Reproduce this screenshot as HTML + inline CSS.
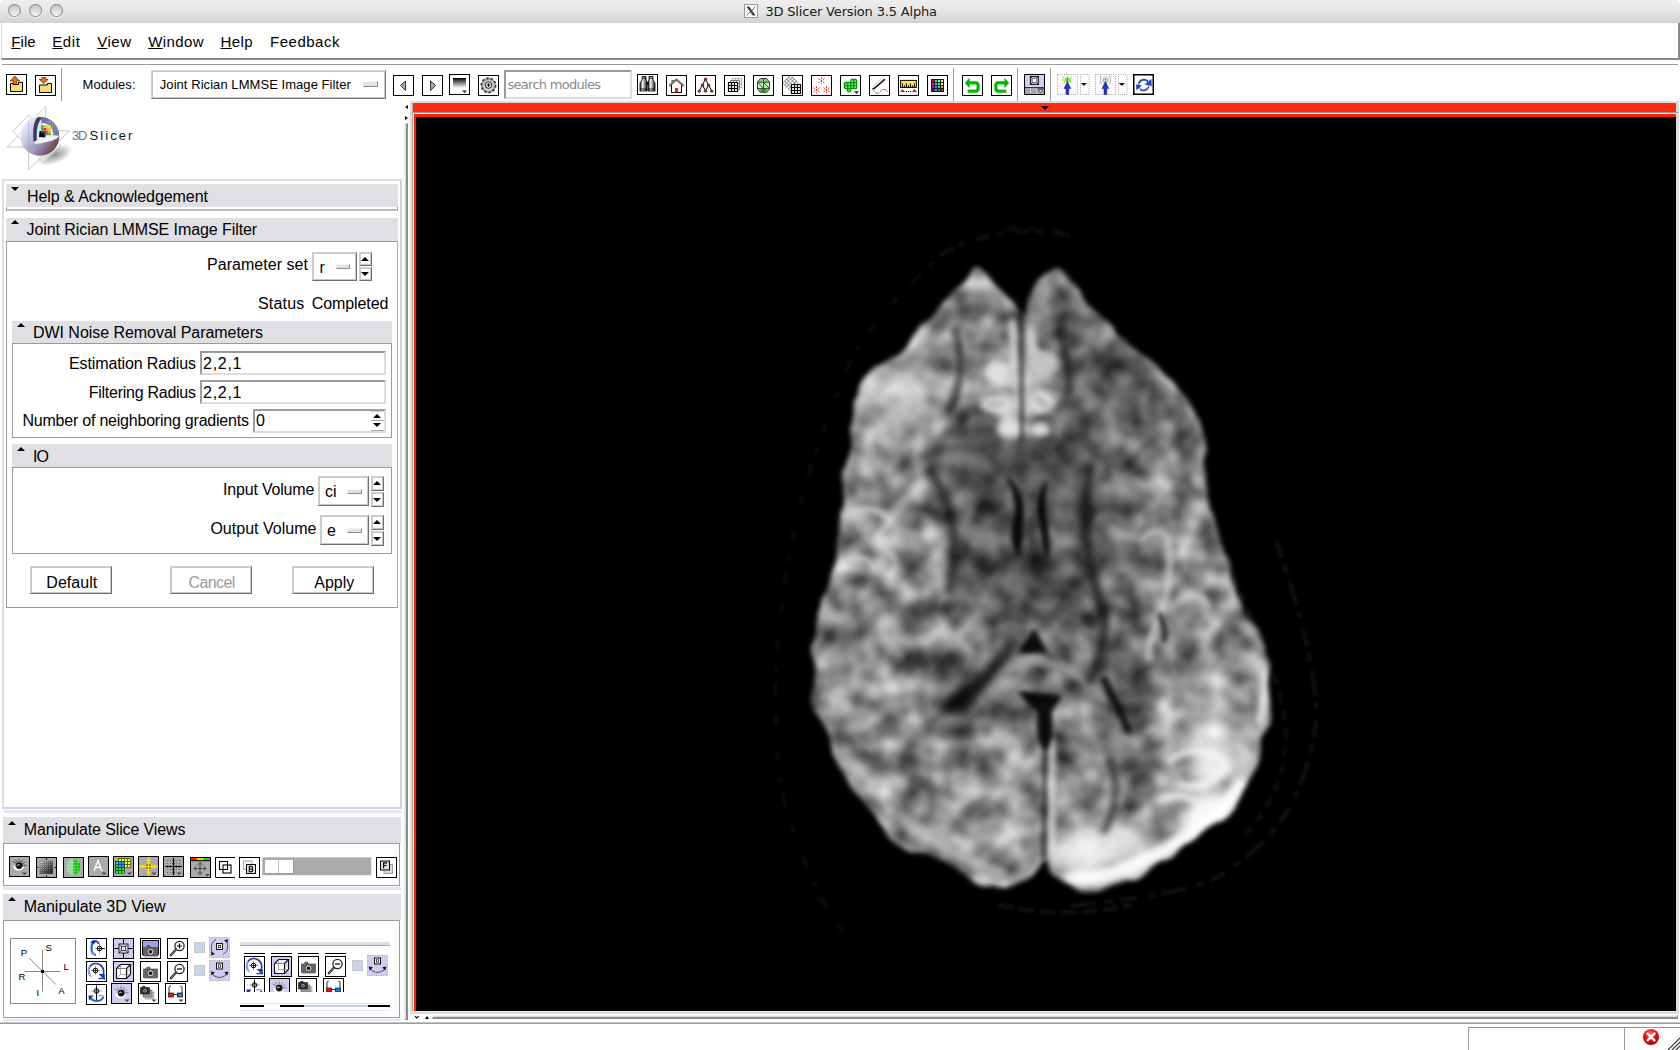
<!DOCTYPE html>
<html><head><meta charset="utf-8"><title>3D Slicer Version 3.5 Alpha</title>
<style>
html,body{margin:0;padding:0;background:#fff;}
body{width:1680px;height:1050px;overflow:hidden;position:relative;font-family:"Liberation Sans",sans-serif;color:#000;}
.a{position:absolute;}
.t{position:absolute;white-space:nowrap;line-height:1;}
#titlebar{left:0;top:0;width:1680px;height:23px;background:linear-gradient(#eeeeee,#e6e6e6 45%,#d6d6d6 90%,#cfcfcf);border-radius:5px 5px 0 0;}
.tl{position:absolute;top:4px;width:13px;height:13px;border-radius:50%;background:radial-gradient(circle at 50% 85%,#f4f4f4 0,#d9d9d9 45%,#b9b9b9 100%);box-shadow:0 0 0 1px #8e8e8e inset,0 1px 0 #f6f6f6;}
.band{position:absolute;background:#e0dfe3;}
.fr{position:absolute;border:1px solid #9a9a9a;box-sizing:border-box;}
.h16{font-size:16px;letter-spacing:-.12px;}
.ent{position:absolute;box-sizing:border-box;border:2px solid;border-color:#9c9c9c #dcdcdc #dcdcdc #9c9c9c;background:#fff;}
.btn{position:absolute;box-sizing:border-box;border:1px solid;border-color:#d0d0d0 #6e6e6e #6e6e6e #d0d0d0;background:#fff;box-shadow:0 0 0 1px #c8c8c8 inset;}
.ico{position:absolute;box-sizing:border-box;width:21px;height:21px;border:1px solid #000;background:#fff;}
</style></head><body>
<!-- TITLE BAR -->
<div id="titlebar" class="a">
 <div class="tl" style="left:8px"></div><div class="tl" style="left:29px"></div><div class="tl" style="left:50px"></div>
 <svg id="x11ico" class="a" style="left:744px;top:4px" width="14" height="14" viewBox="0 0 14 14"><rect x=".5" y=".5" width="13" height="13" fill="#fff" stroke="#9a9a9a"/><path d="M2.300 2.500 H5.300 L11.700 11.500 H8.700 Z" fill="#444"/><path d="M11.500 2.500 L2.500 11.500" stroke="#444" stroke-width=".8"/></svg>
 </div>
<!-- MENU BAR -->
<div class="a" id="menubar" style="left:1px;top:23px;width:1676px;height:35px;background:#fff;border-left:1px solid #d8d8d8;border-bottom:2px solid #8a8a8a;border-right:2px solid #8a8a8a;"></div>
<!-- TOOLBAR -->
<div class="a" id="toolbar" style="left:2px;top:64px;width:1676px;height:1px;background:#9a9a9a;"></div>
<!-- load/save icons -->
<svg class="a" style="left:6px;top:74px" width="21" height="21" viewBox="0 0 21 21"><rect x=".5" y=".5" width="20" height="20" fill="#fff" stroke="#000"/><path d="M8.8 2 L13.6 7 L10.8 7 L10.8 10.5 L7 10.5 L7 7 L4 7 Z" fill="#f56a00" stroke="#000" stroke-width=".5"/><path d="M4.5 9.5 H7 V10.5 H12.5 V8.3 H16.5 V17.5 H4.5 Z" fill="#f7dc6f" stroke="#000" stroke-width="1"/></svg>
<svg class="a" style="left:35px;top:75px" width="21" height="21" viewBox="0 0 21 21"><rect x=".5" y=".5" width="20" height="20" fill="#fff" stroke="#000"/><path d="M6.8 2.5 H10.6 V4.3 H13.2 L8.7 8.6 L4.2 4.3 H6.8 Z" fill="#f56a00" stroke="#000" stroke-width=".5"/><path d="M4.5 10 H12.5 V8.5 H16.5 V17.5 H4.5 Z" fill="#f7dc6f" stroke="#000" stroke-width="1"/></svg>
<div class="a" style="left:61px;top:68px;width:1px;height:33px;background:#9a9a9a;"></div>
<!-- module menubutton -->
<div class="a" style="left:151px;top:70px;width:235px;height:29px;box-sizing:border-box;border:1px solid;border-color:#d4d4d4 #7a7a7a #7a7a7a #d4d4d4;box-shadow:0 0 0 1px #c4c4c4 inset;background:#fff;"></div>
<div class="a" style="left:363px;top:81px;width:15px;height:6px;box-sizing:border-box;background:#e2e2e2;border:1px solid;border-color:#f4f4f4 #8c8c8c #8c8c8c #f4f4f4;"></div>
<!-- nav icons -->
<svg class="a" style="left:393px;top:75px" width="21" height="21" viewBox="0 0 21 21"><rect x=".5" y=".5" width="20" height="20" fill="#fff" stroke="#000"/><path d="M12.5 6 L12.5 15.5 L7.5 10.5 Z" fill="#aaa" stroke="#333" stroke-width="1"/></svg>
<svg class="a" style="left:422px;top:75px" width="21" height="21" viewBox="0 0 21 21"><rect x=".5" y=".5" width="20" height="20" fill="#fff" stroke="#000"/><path d="M8.5 6 L8.5 15.5 L13.5 10.5 Z" fill="#aaa" stroke="#333" stroke-width="1"/></svg>
<svg class="a" style="left:449px;top:74px" width="21" height="21" viewBox="0 0 21 21"><defs><linearGradient id="gh" x1="0" y1="0" x2="0" y2="1"><stop offset="0" stop-color="#000"/><stop offset=".25" stop-color="#444"/><stop offset="1" stop-color="#fff"/></linearGradient></defs><rect x=".5" y=".5" width="20" height="20" fill="#fff" stroke="#000"/><rect x="4" y="4" width="13" height="10" fill="url(#gh)"/><path d="M13 16.5 H18 L15.5 19 Z" fill="#222"/></svg>
<svg class="a" style="left:478px;top:75px" width="21" height="21" viewBox="0 0 21 21"><rect x=".5" y=".5" width="20" height="20" fill="#fff" stroke="#000"/><circle cx="10.5" cy="10.3" r="7.6" fill="#9a9a9a"/><circle cx="10.5" cy="10.3" r="7.2" fill="none" stroke="#2a2a2a" stroke-width="1.6" stroke-dasharray="2.2 2.3"/><circle cx="10.5" cy="10.3" r="5.6" fill="#cfcfcf"/><circle cx="10.5" cy="10" r="3.3" fill="#f2f2f2" stroke="#222" stroke-width="1"/><path d="M10.5 8.3 V11.7 M8.8 10 H12.2" stroke="#000" stroke-width="1.2"/></svg>
<!-- search -->
<div class="a" style="left:504px;top:70px;width:128px;height:29px;box-sizing:border-box;border:2px solid;border-color:#9a9a9a #dedede #dedede #9a9a9a;background:#fff;"></div>
<!-- binoculars -->
<svg class="a" style="left:637px;top:74px" width="21" height="21" viewBox="0 0 21 21"><defs><linearGradient id="gb" x1="0" y1="0" x2="1" y2="0"><stop offset="0" stop-color="#222"/><stop offset=".35" stop-color="#e8e8e8"/><stop offset=".6" stop-color="#aaa"/><stop offset="1" stop-color="#111"/></linearGradient></defs><rect x=".5" y=".5" width="20" height="20" fill="#fff" stroke="#000"/><path d="M5 2.5 H9 V6 L10 8 V17 H3 V9 L5 6 Z" fill="url(#gb)" stroke="#000" stroke-width=".8"/><path d="M12 2.5 H16 V6 L18 9 V17 H11 V8 L12 6 Z" fill="url(#gb)" stroke="#000" stroke-width=".8"/><rect x="9" y="8" width="3" height="3" fill="#111"/><path d="M3 15 H10 M11 15 H18 M5 4.2 H9 M12 4.2 H16" stroke="#000" stroke-width=".8"/></svg>
<!-- home -->
<svg class="a" style="left:666px;top:75px" width="21" height="21" viewBox="0 0 21 21"><rect x=".5" y=".5" width="20" height="20" fill="#fff" stroke="#000"/><path d="M5.5 10 V17.5 H15.5 V10" fill="#fff" stroke="#000" stroke-width="1"/><rect x="9" y="13" width="3" height="4.5" fill="#e02a00"/><path d="M3.2 11 L10.5 4.5 L17.8 11" fill="none" stroke="#6e6a5e" stroke-width="2"/><path d="M6 8 V5.5 H7.5 V7" fill="none" stroke="#6e6a5e" stroke-width="1.2"/></svg>
<!-- tree -->
<svg class="a" style="left:695px;top:75px" width="21" height="21" viewBox="0 0 21 21"><rect x=".5" y=".5" width="20" height="20" fill="#fff" stroke="#000"/><path d="M10.5 4 L7.5 10 L4 16 M7.5 10 L10.5 16 M10.5 4 L13.5 10 L16.8 16 M13.5 10 L10.5 16" stroke="#000" stroke-width="1" fill="none"/><g fill="#e02a00" stroke="#000" stroke-width=".5"><ellipse cx="10.5" cy="4" rx="1.5" ry="1"/><ellipse cx="7.5" cy="10" rx="1.5" ry="1"/><ellipse cx="13.5" cy="10" rx="1.5" ry="1"/><ellipse cx="4.3" cy="16.2" rx="1.5" ry="1"/><ellipse cx="10.5" cy="16.2" rx="1.5" ry="1"/><ellipse cx="16.7" cy="16.2" rx="1.5" ry="1"/></g></svg>
<!-- grid stack -->
<svg class="a" style="left:724px;top:75px" width="21" height="21" viewBox="0 0 21 21"><rect x=".5" y=".5" width="20" height="20" fill="#fff" stroke="#000"/><path d="M8.5 3.5 H17.5 V12.5 H8.5 Z M11.5 3.5 V12.5 M14.5 3.5 V12.5 M8.5 6.5 H17.5 M8.5 9.5 H17.5" fill="#fff" stroke="#b0b0b0" stroke-width="1"/><path d="M6.5 5.5 H15.5 V14.5 H6.5 Z M9.5 5.5 V14.5 M12.5 5.5 V14.5 M6.5 8.5 H15.5 M6.5 11.5 H15.5" fill="#fff" stroke="#777" stroke-width="1"/><path d="M4.5 7.5 H13.5 V16.5 H4.5 Z M7.5 7.5 V16.5 M10.5 7.5 V16.5 M4.5 10.5 H13.5 M4.5 13.5 H13.5" fill="#fff" stroke="#000" stroke-width="1.2"/></svg>
<!-- green octagon -->
<svg class="a" style="left:753px;top:75px" width="21" height="21" viewBox="0 0 21 21"><rect x=".5" y=".5" width="20" height="20" fill="#fff" stroke="#000"/><path d="M7.5 3.5 H13.5 L16.5 7 V14 L13.5 17.5 H7.5 L4.5 14 V7 Z" fill="#8cc878" stroke="#2c4a2c" stroke-width="1"/><path d="M7.5 13.5 H13.5 L13.5 17.5 H7.5 Z" fill="#4a9a3a"/><path d="M5 7.5 H10 V13 H5 Z M11 7.5 H16 V13 H11 Z" fill="#c4f0b4"/><path d="M10.5 3.5 V17.5 M4.5 7.3 H16.5 M4.5 13.5 H16.5 M5.5 8 L10 13 M11 8 L16 13" stroke="#2c4a2c" stroke-width=".9" fill="none"/></svg>
<!-- rotated grids -->
<svg class="a" style="left:782px;top:75px" width="21" height="21" viewBox="0 0 21 21"><rect x=".5" y=".5" width="20" height="20" fill="#fff" stroke="#000"/><g transform="rotate(45 8.5 8)" stroke="#222" stroke-width=".75" fill="none" stroke-dasharray="1.2 .5"><path d="M3 2.5 H14 V13.5 H3 Z M5.75 2.5 V13.5 M8.5 2.5 V13.5 M11.25 2.5 V13.5 M3 5.25 H14 M3 8 H14 M3 10.75 H14"/></g><path d="M9.5 9.5 H18.5 V18.5 H9.5 Z M12.5 9.5 V18.5 M15.5 9.5 V18.5 M9.5 12.5 H18.5 M9.5 15.5 H18.5" fill="#fff" stroke="#000" stroke-width="1.2"/></svg>
<!-- red stars -->
<svg class="a" style="left:811px;top:75px" width="21" height="21" viewBox="0 0 21 21"><rect x=".5" y=".5" width="20" height="20" fill="#fff" stroke="#000"/><g stroke="#ff1010" stroke-width="1" stroke-dasharray="1.6 1.2"><path d="M10.5 2.5 V9 M7.5 3.7 L13.5 7.8 M13.5 3.7 L7.5 7.8"/><path d="M5.5 11.5 V18 M2.5 12.7 L8.5 16.8 M8.5 12.7 L2.5 16.8"/><path d="M15.5 11.5 V18 M12.5 12.7 L18.5 16.8 M18.5 12.7 L12.5 16.8"/></g></svg>
<!-- green blob -->
<svg class="a" style="left:840px;top:75px" width="21" height="21" viewBox="0 0 21 21"><rect x=".5" y=".5" width="20" height="20" fill="#fff" stroke="#000"/><path d="M11.5 4 H16 L17 5 V13 L16 14 H11 V16.2 L10.2 17 H8 L7 16 V14 H5 L4 13 V8 L5 7 H10.5 V5 Z" fill="#00a000" stroke="#008800" stroke-width=".5"/><g fill="#f0ffe8"><rect x="11.5" y="5.4" width="1.3" height="1.3"/><rect x="14.6" y="5.4" width="1.3" height="1.3"/><rect x="5.5" y="8.4" width="1.3" height="1.3"/><rect x="8.5" y="8.4" width="1.3" height="1.3"/><rect x="11.5" y="8.4" width="1.3" height="1.3"/><rect x="14.6" y="8.4" width="1.3" height="1.3"/><rect x="5.5" y="11.4" width="1.3" height="1.3"/><rect x="8.5" y="11.4" width="1.3" height="1.3"/><rect x="11.5" y="11.4" width="1.3" height="1.3"/><rect x="14.6" y="11.4" width="1.3" height="1.3"/><rect x="8.5" y="14.5" width="1.3" height="1.3"/></g><path d="M14 16.3 H19 L16.5 19 Z" fill="#223"/></svg>
<!-- pencil -->
<svg class="a" style="left:869px;top:75px" width="21" height="21" viewBox="0 0 21 21"><rect x=".5" y=".5" width="20" height="20" fill="#fff" stroke="#000"/><path d="M4.1 11.6 L13.4 2.4 L16 4.2 L5 14 Z" fill="#f6f6f6"/><path d="M4.1 11.6 L13.4 2.4 L15.6 3.6" fill="none" stroke="#aaa" stroke-width=".8" stroke-dasharray="1.2 .8"/><path d="M4.6 14 L15.9 4.2" stroke="#000" stroke-width="1.5"/><path d="M2.9 14.6 L4 12.6 L5.6 14 Z" fill="#000"/><path d="M4.1 15.3 C5.5 17 7 18.6 8.4 18.5 C10.5 18.3 12 14.6 14.6 14.4 C16.2 14.3 17.5 15.4 18.4 16.6" fill="none" stroke="#ff1060" stroke-width="1" stroke-dasharray="2 .7"/></svg>
<!-- ruler -->
<svg class="a" style="left:898px;top:75px" width="21" height="21" viewBox="0 0 21 21"><rect x=".5" y=".5" width="20" height="20" fill="#fff" stroke="#000"/><rect x="2.6" y="5.4" width="15.8" height="7" fill="#ffe840" stroke="#000" stroke-width="1"/><path d="M4.5 12.4 V8.3 M8.4 12.4 V8.3 M12.4 12.4 V8.3 M16.4 12.4 V8.3 M6.4 12.4 V10.4 M10.4 12.4 V10.4 M14.4 12.4 V10.4" stroke="#000" stroke-width="1"/><path d="M2 17 L4.5 14 L7 17 Z M14 17 L16.5 14 L19 17 Z" fill="#f00"/><path d="M8 16.500 H13" stroke="#000" stroke-width="1" stroke-dasharray="1 1"/></svg>
<!-- color table -->
<svg class="a" style="left:927px;top:75px" width="21" height="21" viewBox="0 0 21 21"><rect x=".5" y=".5" width="20" height="20" fill="#fff" stroke="#000"/><rect x="4" y="4" width="13" height="13" fill="#181818"/><rect x="5" y="5" width="2" height="2" fill="#ff0000"/><rect x="8" y="5" width="2" height="2" fill="#30ff50"/><rect x="11" y="5" width="2" height="2" fill="#a0ffff"/><rect x="14" y="5" width="2" height="2" fill="#ffffa0"/><rect x="5" y="8" width="2" height="2" fill="#ff00ff"/><rect x="8" y="8" width="2" height="2" fill="#90a0e0"/><rect x="11" y="8" width="2" height="2" fill="#00f0f0"/><rect x="14" y="8" width="2" height="2" fill="#ffff30"/><rect x="5" y="11" width="2" height="2" fill="#c000c0"/><rect x="8" y="11" width="2" height="2" fill="#20a0b0"/><rect x="11" y="11" width="2" height="2" fill="#00e0a0"/><rect x="14" y="11" width="2" height="2" fill="#ff9060"/><rect x="5" y="14" width="2" height="2" fill="#7000b0"/><rect x="8" y="14" width="2" height="2" fill="#6090f0"/><rect x="11" y="14" width="2" height="2" fill="#00a020"/><rect x="14" y="14" width="2" height="2" fill="#ff0060"/></svg>
<div class="a" style="left:953px;top:68px;width:1px;height:33px;background:#9a9a9a;"></div>
<!-- undo / redo -->
<svg class="a" style="left:962px;top:75px" width="21" height="21" viewBox="0 0 21 21"><rect x=".5" y=".5" width="20" height="20" fill="#fff" stroke="#000"/><path d="M2.9 8 L7.5 2.9 V6.2 H13.5 C16.2 6.2 17.7 8 17.7 10.5 V13.5 C17.7 16 16.2 17.7 13.5 17.7 H5.9 V14.7 H13 C14.2 14.7 14.7 14 14.7 13 V10.8 C14.7 9.8 14.2 9.2 13 9.2 H7.5 V12.9 Z" fill="#00b400" stroke="#40d840" stroke-width=".5"/></svg>
<svg class="a" style="left:991px;top:75px" width="21" height="21" viewBox="0 0 21 21"><rect x=".5" y=".5" width="20" height="20" fill="#fff" stroke="#000"/><g transform="translate(21 0) scale(-1 1)"><path d="M2.9 8 L7.5 2.9 V6.2 H13.5 C16.2 6.2 17.7 8 17.7 10.5 V13.5 C17.7 16 16.2 17.7 13.5 17.7 H5.9 V14.7 H13 C14.2 14.7 14.7 14 14.7 13 V10.8 C14.7 9.8 14.2 9.2 13 9.2 H7.5 V12.9 Z" fill="#00b400" stroke="#40d840" stroke-width=".5"/></g></svg>
<div class="a" style="left:1017px;top:68px;width:1px;height:33px;background:#9a9a9a;"></div>
<!-- layout -->
<svg class="a" style="left:1024px;top:74px" width="21" height="21" viewBox="0 0 21 21"><rect x=".5" y=".5" width="20" height="20" fill="#a8a8a8" stroke="#000"/><rect x="1" y="1" width="19" height="12" fill="#d0d0f4"/><rect x="6.400" y="2.400" width="8" height="8" fill="#e4e4fa" stroke="#111" stroke-width="1"/><path d="M6 2 L8 4 M14.800 2 L12.800 4 M6 10.800 L8 8.800 M14.800 10.800 L12.800 8.800" stroke="#111" stroke-width=".9"/><rect x="8" y="4" width="4.800" height="4.800" rx="1" fill="#e4e4fa" stroke="#111" stroke-width=".7"/><rect x="9.200" y="5.200" width="2.400" height="2.400" fill="#fff"/><path d="M1 13.500 H20" stroke="#333" stroke-width="1"/><path d="M6.500 14 V20 M12.500 14 V20" stroke="#c8c8c8" stroke-width="1"/><path d="M13 14.500 H20" stroke="#666" stroke-width="1"/><path d="M14.200 15.800 H19 L16.600 18.600 Z" fill="#fff" stroke="#111" stroke-width=".7"/></svg>
<div class="a" style="left:1050px;top:68px;width:1px;height:33px;background:#9a9a9a;"></div>
<!-- mouse mode 1 -->
<svg class="a" style="left:1057px;top:74px" width="33" height="21" viewBox="0 0 33 21"><rect x=".5" y=".5" width="20" height="20" fill="#fff8f8" stroke="#a0a0a0" stroke-dasharray="1 1.180"/><rect x="23.500" y=".5" width="8.500" height="20" fill="#fff" stroke="#a0a0a0" stroke-dasharray="1 1.180"/><path d="M10.400 2.500 V9.500 M6.200 3.200 L14.600 8.800 M14.600 3.200 L6.200 8.800 M5 6 H15.800" stroke="#10e010" stroke-width="1" stroke-dasharray="1.600 1"/><circle cx="10.400" cy="6" r="2.400" fill="#40e020"/><circle cx="10.400" cy="6" r="1.500" fill="#e8f020"/><circle cx="10.400" cy="6" r=".7" fill="#111"/><path d="M10.400 7.600 L13.800 14.600 H11.800 V20.400 H9 V14.600 H7 Z" fill="#2038c0" stroke="#101a80" stroke-width=".5"/><path d="M23.800 9 H30 L26.900 12 Z" fill="#111"/></svg>
<svg class="a" style="left:1095px;top:74px" width="33" height="21" viewBox="0 0 33 21"><rect x=".5" y=".5" width="20" height="20" fill="#fff8f8" stroke="#a0a0a0" stroke-dasharray="1 1.180"/><rect x="23.500" y=".5" width="8.500" height="20" fill="#fff" stroke="#a0a0a0" stroke-dasharray="1 1.180"/><path d="M7 2.500 H5.500 V9.500 H7 M13.800 2.500 H15.300 V9.500 H13.800" stroke="#a8b8a0" stroke-width=".9" fill="none"/><circle cx="10.400" cy="6" r="2.600" fill="#c8d0c8" stroke="#889088" stroke-width=".6"/><circle cx="10.400" cy="5.800" r="1.400" fill="#fff"/><circle cx="10.400" cy="5.800" r=".7" fill="#063"/><path d="M10.400 7.600 L13.800 14.600 H11.800 V20.400 H9 V14.600 H7 Z" fill="#2038c0" stroke="#101a80" stroke-width=".5"/><path d="M23.800 9 H30 L26.900 12 Z" fill="#111"/></svg>
<!-- refresh -->
<svg class="a" style="left:1133px;top:74px" width="21" height="21" viewBox="0 0 21 21"><rect x=".75" y=".75" width="19.500" height="19.500" fill="#fff" stroke="#000" stroke-width="1.500"/><circle cx="10.800" cy="11" r="5.200" fill="none" stroke="#8890b8" stroke-width="1.300"/><path d="M5.800 9.500 C7 5.500 12 4.500 14.800 7.200" fill="none" stroke="#2848c8" stroke-width="1.800"/><path d="M11.500 10.500 L18.800 12 L18.400 4.800 Z" fill="#2848c8"/><path d="M15.500 13 C14 16.500 10 17.500 7 15.500" fill="none" stroke="#2848c8" stroke-width="1.500"/><path d="M8.800 11.200 L3 10.500 L3.500 16.500 L5.500 14.500 Z" fill="#2040c0"/></svg>

<!-- LEFT PANEL -->
<!-- logo -->
<svg class="a" style="left:0;top:100px" width="90" height="75" viewBox="0 0 90 75">
<defs>
<linearGradient id="lgs" x1="0" y1="0.2" x2="1" y2="1"><stop offset="0" stop-color="#f2f5fc"/><stop offset=".3" stop-color="#c4c8e4"/><stop offset=".55" stop-color="#9c98bc"/><stop offset=".8" stop-color="#6e4c5c"/><stop offset="1" stop-color="#4c2428"/></linearGradient>
<radialGradient id="lsh" cx="50%" cy="50%" r="50%"><stop offset="0" stop-color="#444" stop-opacity=".6"/><stop offset=".6" stop-color="#666" stop-opacity=".3"/><stop offset="1" stop-color="#888" stop-opacity="0"/></radialGradient>
<clipPath id="lclip"><circle cx="39.800" cy="36.300" r="19.500"/></clipPath>
</defs>
<ellipse cx="55" cy="55" rx="19" ry="9" fill="url(#lsh)" transform="rotate(-22 55 55)"/>
<g fill="#fff" fill-opacity=".3" stroke="#909090" stroke-width=".5"><path d="M45.700 6.400 L7.100 47.100 L45.700 47.100 Z"/><path d="M28.600 15 L12.900 31.400 L44.300 62.900 L60.700 45.700 Z"/><path d="M28.600 69.600 L28.600 28.600 L69.300 31 Z"/></g>
<circle cx="39.800" cy="36.300" r="19.500" fill="url(#lgs)"/>
<g clip-path="url(#lclip)">
<path d="M28.600 10 V60 M15 47 L60 47" stroke="#8888a8" stroke-width=".5" opacity=".6"/>
<!-- cut-out octant -->
<path d="M38.500 17 C50 15 59.500 24 59.500 36.500 L35 42 Z" fill="#6a749c"/>
<path d="M42 23 C48.500 22.500 53.500 28 53.500 35.500 L38 40 Z" fill="#f4f6fa"/>
<path d="M50 19 V36 M52.500 19 V36 M55 19 V36 M57.500 19 V36 M46 21.500 H60 M46 24 H60 M46 26.500 H60 M46 29 H60" stroke="#b8bcc8" stroke-width=".35"/>
<path d="M38.500 16.800 C34 20 32.500 28 33.500 41.500 L36.500 40.500 C36 30 37.500 22 41.500 18.500 Z" fill="#3a3a5c"/>
<path d="M41 19.500 C37.500 23 36.500 31 37 40 L41.500 37.500 L41.500 20 Z" fill="#dfe8e8"/>
<path d="M34 42.500 C40 37 52 34.500 59.300 36 C58 39 50 42 36 44 Z" fill="#f0f0f6"/>
<path d="M39.500 31 L47 31 L45 37.500 L39 37 Z" fill="#0a0a0a"/>
</g>
<g><rect x="41.200" y="25.400" width="2.400" height="2.400" fill="#10a040"/><rect x="43.800" y="25.400" width="2.400" height="2.400" fill="#f4c000"/><rect x="46.400" y="25.400" width="2.300" height="2.400" fill="#f0c820"/><rect x="48.800" y="25.400" width="2.200" height="2.400" fill="#f0d840"/><rect x="41.200" y="28" width="2.400" height="2.400" fill="#10a040"/><rect x="43.800" y="28" width="2.400" height="2.400" fill="#f42000"/><rect x="46.400" y="28" width="2.300" height="2.400" fill="#f4a000"/><rect x="48.800" y="28" width="2.200" height="2.400" fill="#f0c820"/><rect x="41.200" y="30.600" width="2.400" height="2.400" fill="#1060e0"/><rect x="43.800" y="30.600" width="2.400" height="2.400" fill="#f41010"/><rect x="46.400" y="30.600" width="2.300" height="2.400" fill="#f46000"/><rect x="48.800" y="30.600" width="2.200" height="2.400" fill="#f4c000"/><rect x="43.800" y="33.200" width="2.400" height="2" fill="#1060e0"/><rect x="46.400" y="33.200" width="2.300" height="2" fill="#10a040"/><rect x="48.800" y="33.200" width="2.200" height="2" fill="#30b030"/></g>
</svg>
<!-- module panel outer frame -->
<div class="a" style="left:2px;top:179px;width:400px;height:630px;box-sizing:border-box;border:2px solid;border-color:#dedede #d2d2d2 #d2d2d2 #dedede;"></div>
<div class="a" style="left:4px;top:810px;width:397px;height:3px;background:#e6e4fc;"></div>
<!-- Help & Ack -->
<div class="band" style="left:6px;top:184px;width:392px;height:23px;"></div>
<div class="a" style="left:11px;top:187px;width:0;height:0;border-left:4px solid transparent;border-right:4px solid transparent;border-top:4px solid #000;"></div>
<div class="a" style="left:6px;top:207px;width:392px;height:4px;box-sizing:border-box;border:1px solid #9a9a9a;border-top:none;border-bottom:2px solid #bcbcbc;"></div>
<!-- Joint Rician -->
<div class="band" style="left:6px;top:218px;width:392px;height:23px;"></div>
<div class="a" style="left:11px;top:220px;width:0;height:0;border-left:4px solid transparent;border-right:4px solid transparent;border-bottom:4px solid #000;"></div>
<div class="a" style="left:6px;top:241px;width:392px;height:367px;box-sizing:border-box;border:1px solid #9a9a9a;border-right-color:#b0b0b0;"></div>
<!-- Parameter set -->
<div class="btn" style="left:312px;top:252px;width:45px;height:29px;"></div>
<div class="a" style="left:336px;top:264px;width:14px;height:5px;box-sizing:border-box;background:#e2e2e2;border:1px solid;border-color:#f4f4f4 #8c8c8c #8c8c8c #f4f4f4;"></div>
<div class="btn" style="left:359px;top:252px;width:13px;height:14px;"></div>
<div class="btn" style="left:359px;top:267px;width:13px;height:14px;"></div>
<div class="a" style="left:361px;top:257px;width:0;height:0;border-left:4px solid transparent;border-right:4px solid transparent;border-bottom:4px solid #000;"></div>
<div class="a" style="left:361px;top:272px;width:0;height:0;border-left:4px solid transparent;border-right:4px solid transparent;border-top:4px solid #000;"></div>
<!-- DWI -->
<div class="band" style="left:12px;top:321px;width:380px;height:22px;"></div>
<div class="a" style="left:17px;top:323px;width:0;height:0;border-left:4px solid transparent;border-right:4px solid transparent;border-bottom:4px solid #000;"></div>
<div class="a" style="left:12px;top:343px;width:380px;height:95px;box-sizing:border-box;border:1px solid #9a9a9a;"></div>
<div class="ent" style="left:200px;top:351px;width:186px;height:24px;"></div>
<div class="ent" style="left:200px;top:380px;width:186px;height:24px;"></div>
<div class="ent" style="left:253px;top:409px;width:133px;height:24px;"></div>
<div class="a" style="left:373px;top:414px;width:0;height:0;border-left:4px solid transparent;border-right:4px solid transparent;border-bottom:4px solid #000;"></div>
<div class="a" style="left:373px;top:423px;width:0;height:0;border-left:4px solid transparent;border-right:4px solid transparent;border-top:4px solid #000;"></div>
<div class="a" style="left:371px;top:411px;width:13px;height:1px;background:#ccc"></div>
<div class="a" style="left:371px;top:420px;width:13px;height:1px;background:#aaa"></div>
<div class="a" style="left:371px;top:430px;width:13px;height:1px;background:#aaa"></div>
<!-- IO -->
<div class="band" style="left:12px;top:444px;width:380px;height:23px;"></div>
<div class="a" style="left:17px;top:447px;width:0;height:0;border-left:4px solid transparent;border-right:4px solid transparent;border-bottom:4px solid #000;"></div>
<div class="a" style="left:12px;top:467px;width:380px;height:87px;box-sizing:border-box;border:1px solid #9a9a9a;"></div>
<div class="btn" style="left:318px;top:476px;width:51px;height:30px;"></div>
<div class="a" style="left:347px;top:489px;width:15px;height:5px;box-sizing:border-box;background:#e2e2e2;border:1px solid;border-color:#f4f4f4 #8c8c8c #8c8c8c #f4f4f4;"></div>
<div class="btn" style="left:371px;top:476px;width:13px;height:15px;"></div>
<div class="btn" style="left:371px;top:492px;width:13px;height:15px;"></div>
<div class="a" style="left:373px;top:481px;width:0;height:0;border-left:4px solid transparent;border-right:4px solid transparent;border-bottom:4px solid #000;"></div>
<div class="a" style="left:373px;top:498px;width:0;height:0;border-left:4px solid transparent;border-right:4px solid transparent;border-top:4px solid #000;"></div>
<div class="btn" style="left:320px;top:515px;width:49px;height:30px;"></div>
<div class="a" style="left:347px;top:528px;width:15px;height:5px;box-sizing:border-box;background:#e2e2e2;border:1px solid;border-color:#f4f4f4 #8c8c8c #8c8c8c #f4f4f4;"></div>
<div class="btn" style="left:371px;top:515px;width:13px;height:15px;"></div>
<div class="btn" style="left:371px;top:531px;width:13px;height:15px;"></div>
<div class="a" style="left:373px;top:520px;width:0;height:0;border-left:4px solid transparent;border-right:4px solid transparent;border-bottom:4px solid #000;"></div>
<div class="a" style="left:373px;top:537px;width:0;height:0;border-left:4px solid transparent;border-right:4px solid transparent;border-top:4px solid #000;"></div>
<!-- buttons -->
<div class="btn" style="left:30px;top:566px;width:82px;height:28px;"></div>
<div class="btn" style="left:170px;top:566px;width:82px;height:28px;"></div>
<div class="btn" style="left:292px;top:566px;width:82px;height:28px;"></div>
<!-- Manipulate Slice Views -->
<div class="band" style="left:3px;top:817px;width:398px;height:26px;"></div>
<div class="a" style="left:8px;top:821px;width:0;height:0;border-left:4px solid transparent;border-right:4px solid transparent;border-bottom:4px solid #000;"></div>
<div class="a" style="left:3px;top:843px;width:397px;height:43px;box-sizing:border-box;border:1px solid #9a9a9a;"></div>
<div class="a" style="left:3px;top:887px;width:398px;height:3px;background:#e4e4fa;"></div>
<svg class="a" style="left:0;top:850px" width="404" height="34" viewBox="0 850 404 34">
<defs>
<g id="dd"><path d="M0 0 H5 L2.5 2.6 Z" fill="#444"/></g>
<g id="gbox"><rect x=".5" y=".5" width="20" height="20" fill="#aaa" stroke="#000"/></g>
<g id="wbox"><rect x=".5" y=".5" width="20" height="20" fill="#fff" stroke="#000"/></g>
<g id="eye"><path d="M0 0 C2 -3 6 -3 8 0 C6 3 2 3 0 0 Z" fill="#fff" stroke="#222" stroke-width=".7"/><circle cx="4" cy="0" r="2.2" fill="#111"/><circle cx="3.4" cy="-.7" r=".7" fill="#fff"/><path d="M1 -3 L0 -5 M3 -3.6 L2.6 -6 M5.2 -3.6 L5.8 -6 M7.2 -2.6 L8.6 -4.6" stroke="#222" stroke-width=".6"/></g>
</defs>
<!-- 1 eye -->
<g transform="translate(9 856)"><use href="#gbox"/><path d="M5 10.500 C6 14.800 12.500 15.500 14.600 10.500 C13.500 13 7.500 13.200 5 10.500 Z" fill="#fff" stroke="#fff" stroke-width="1.200"/><circle cx="10.200" cy="9.600" r="3.400" fill="#111"/><path d="M8 10 C8.500 8.500 10 8.200 10.800 9.200" fill="none" stroke="#fff" stroke-width=".9"/><path d="M7.500 7.500 L3.600 5.400 M8.500 6.600 L6.300 3.600 M10.200 6 L10 2.800 M12 6.600 L13.500 3.800 M13.300 8 L15.800 6 M13.800 9.300 H17.500" stroke="#222" stroke-width=".7"/><g transform="translate(12.800 16.400)"><use href="#dd"/></g></g>
<!-- 2 grid gradient -->
<g transform="translate(36 857)"><defs><linearGradient id="gg2" x1="0" y1="0" x2="1" y2="1"><stop offset="0" stop-color="#9a9a9a"/><stop offset=".5" stop-color="#555"/><stop offset="1" stop-color="#1a1a1a"/></linearGradient></defs><use href="#gbox"/><path d="M10.500 0 V2.500 M10.500 18.500 V21 M0 10.500 H2.500 M18.500 10.500 H21" stroke="#000" stroke-width="1.200"/><rect x="3.700" y="3.700" width="13.200" height="13.200" fill="url(#gg2)"/><rect x="4.6" y="4.6" width="1.100" height="1.100" fill="rgb(255,255,255)"/><rect x="6.7" y="4.6" width="1.100" height="1.100" fill="rgb(233,233,233)"/><rect x="8.8" y="4.6" width="1.100" height="1.100" fill="rgb(211,211,211)"/><rect x="10.9" y="4.6" width="1.100" height="1.100" fill="rgb(189,189,189)"/><rect x="13.0" y="4.6" width="1.100" height="1.100" fill="rgb(167,167,167)"/><rect x="15.1" y="4.6" width="1.100" height="1.100" fill="rgb(145,145,145)"/><rect x="4.6" y="6.7" width="1.100" height="1.100" fill="rgb(233,233,233)"/><rect x="6.7" y="6.7" width="1.100" height="1.100" fill="rgb(211,211,211)"/><rect x="8.8" y="6.7" width="1.100" height="1.100" fill="rgb(189,189,189)"/><rect x="10.9" y="6.7" width="1.100" height="1.100" fill="rgb(167,167,167)"/><rect x="13.0" y="6.7" width="1.100" height="1.100" fill="rgb(145,145,145)"/><rect x="15.1" y="6.7" width="1.100" height="1.100" fill="rgb(123,123,123)"/><rect x="4.6" y="8.8" width="1.100" height="1.100" fill="rgb(211,211,211)"/><rect x="6.7" y="8.8" width="1.100" height="1.100" fill="rgb(189,189,189)"/><rect x="8.8" y="8.8" width="1.100" height="1.100" fill="rgb(167,167,167)"/><rect x="10.9" y="8.8" width="1.100" height="1.100" fill="rgb(145,145,145)"/><rect x="13.0" y="8.8" width="1.100" height="1.100" fill="rgb(123,123,123)"/><rect x="15.1" y="8.8" width="1.100" height="1.100" fill="rgb(101,101,101)"/><rect x="4.6" y="10.9" width="1.100" height="1.100" fill="rgb(189,189,189)"/><rect x="6.7" y="10.9" width="1.100" height="1.100" fill="rgb(167,167,167)"/><rect x="8.8" y="10.9" width="1.100" height="1.100" fill="rgb(145,145,145)"/><rect x="10.9" y="10.9" width="1.100" height="1.100" fill="rgb(123,123,123)"/><rect x="13.0" y="10.9" width="1.100" height="1.100" fill="rgb(101,101,101)"/><rect x="15.1" y="10.9" width="1.100" height="1.100" fill="rgb(79,79,79)"/><rect x="4.6" y="13.0" width="1.100" height="1.100" fill="rgb(167,167,167)"/><rect x="6.7" y="13.0" width="1.100" height="1.100" fill="rgb(145,145,145)"/><rect x="8.8" y="13.0" width="1.100" height="1.100" fill="rgb(123,123,123)"/><rect x="10.9" y="13.0" width="1.100" height="1.100" fill="rgb(101,101,101)"/><rect x="13.0" y="13.0" width="1.100" height="1.100" fill="rgb(79,79,79)"/><rect x="15.1" y="13.0" width="1.100" height="1.100" fill="rgb(60,60,60)"/><rect x="4.6" y="15.1" width="1.100" height="1.100" fill="rgb(145,145,145)"/><rect x="6.7" y="15.1" width="1.100" height="1.100" fill="rgb(123,123,123)"/><rect x="8.8" y="15.1" width="1.100" height="1.100" fill="rgb(101,101,101)"/><rect x="10.9" y="15.1" width="1.100" height="1.100" fill="rgb(79,79,79)"/><rect x="13.0" y="15.1" width="1.100" height="1.100" fill="rgb(60,60,60)"/><rect x="15.1" y="15.1" width="1.100" height="1.100" fill="rgb(60,60,60)"/></g>
<!-- 3 green blob -->
<g transform="translate(63 857)"><use href="#gbox"/><path d="M10.500 1.500 H8 L6.500 3.500 L3.600 6 V14 L6.500 16.500 L8 18 H10.500 Z" fill="#98d898"/><path d="M10.500 1.500 H12.500 L14 3.500 L17 6.500 V13 L14 16.500 L12.500 18 H10.500 Z" fill="#18c418"/><g fill="#d4d8d4"><rect x="5.2" y="4.8" width="1.300" height="1.300"/><rect x="5.2" y="7.8" width="1.300" height="1.300"/><rect x="5.2" y="10.8" width="1.300" height="1.300"/><rect x="5.2" y="13.8" width="1.300" height="1.300"/><rect x="8.2" y="4.8" width="1.300" height="1.300"/><rect x="8.2" y="7.8" width="1.300" height="1.300"/><rect x="8.2" y="10.8" width="1.300" height="1.300"/><rect x="8.2" y="13.8" width="1.300" height="1.300"/><rect x="8.200" y="1.800" width="1.300" height="1.300"/><rect x="8.200" y="16.800" width="1.300" height="1.300"/></g><g fill="#80ff58"><rect x="11.2" y="4.8" width="1.300" height="1.300"/><rect x="11.2" y="7.8" width="1.300" height="1.300"/><rect x="11.2" y="10.8" width="1.300" height="1.300"/><rect x="11.2" y="13.8" width="1.300" height="1.300"/><rect x="14.2" y="4.8" width="1.300" height="1.300"/><rect x="14.2" y="7.8" width="1.300" height="1.300"/><rect x="14.2" y="10.8" width="1.300" height="1.300"/><rect x="14.2" y="13.8" width="1.300" height="1.300"/><rect x="11.200" y="1.800" width="1.300" height="1.300"/><rect x="11.200" y="16.800" width="1.300" height="1.300"/></g></g>
<!-- 4 A -->
<g transform="translate(88 856)"><use href="#gbox"/><path d="M6 15 L10 4.5 L14 15 M7.5 11.5 H12.5" fill="none" stroke="#fff" stroke-width="1.3"/><g transform="translate(13.5 16.5)"><use href="#dd"/></g></g>
<!-- 5 colored grids -->
<g transform="translate(113 856)"><use href="#gbox"/><rect x="6.500" y="3.500" width="12" height="9" fill="#777" opacity=".6"/><rect x="5" y="2" width="12.500" height="9.500" fill="#5c5c00"/><g fill="#ffff20"><rect x="6.0" y="3.0" width="2" height="2"/><rect x="6.0" y="6.0" width="2" height="2"/><rect x="6.0" y="9.0" width="2" height="2"/><rect x="9.0" y="3.0" width="2" height="2"/><rect x="9.0" y="6.0" width="2" height="2"/><rect x="9.0" y="9.0" width="2" height="2"/><rect x="12.0" y="3.0" width="2" height="2"/><rect x="12.0" y="6.0" width="2" height="2"/><rect x="12.0" y="9.0" width="2" height="2"/><rect x="15.0" y="3.0" width="2" height="2"/><rect x="15.0" y="6.0" width="2" height="2"/><rect x="15.0" y="9.0" width="2" height="2"/></g><rect x="2" y="5" width="9.800" height="12.500" fill="#0a5a0a"/><g fill="#20f020"><rect x="3.0" y="6.0" width="2" height="2"/><rect x="3.0" y="9.0" width="2" height="2"/><rect x="3.0" y="12.0" width="2" height="2"/><rect x="3.0" y="15.0" width="2" height="2"/><rect x="6.0" y="6.0" width="2" height="2"/><rect x="6.0" y="9.0" width="2" height="2"/><rect x="6.0" y="12.0" width="2" height="2"/><rect x="6.0" y="15.0" width="2" height="2"/><rect x="9.0" y="6.0" width="2" height="2"/><rect x="9.0" y="9.0" width="2" height="2"/><rect x="9.0" y="12.0" width="2" height="2"/><rect x="9.0" y="15.0" width="2" height="2"/></g><rect x="5.200" y="5.200" width="6" height="6" fill="#1048c0"/><g fill="#20a0ff"><rect x="6.0" y="6.0" width="2" height="2"/><rect x="6.0" y="9.0" width="2" height="2"/><rect x="9.0" y="6.0" width="2" height="2"/><rect x="9.0" y="9.0" width="2" height="2"/></g><g transform="translate(14 16.500)"><use href="#dd"/></g></g>
<!-- 6 yellow crosshair -->
<g transform="translate(138 856)"><use href="#gbox"/><path d="M10.500 1 V20 M1 10.500 H20" stroke="#ffe800" stroke-width="1.500"/><path d="M8.800 4.500 H12.200 M8.800 16.500 H12.200 M4.500 8.800 V12.200 M16.500 8.800 V12.200" stroke="#ffe800" stroke-width="1.300"/><rect x="7.500" y="7.500" width="6" height="6" rx="1.500" fill="#ffe800"/><g fill="#303870"><rect x="8.300" y="8.300" width="1.500" height="1.500"/><rect x="11.200" y="8.300" width="1.500" height="1.500"/><rect x="8.300" y="11.200" width="1.500" height="1.500"/><rect x="11.200" y="11.200" width="1.500" height="1.500"/></g><g transform="translate(13.500 16.500)"><use href="#dd"/></g></g>
<!-- 7 black crosshair -->
<g transform="translate(163 856)"><use href="#gbox"/><g fill="#666"><circle cx="4.5" cy="4.5" r=".6"/><circle cx="7.5" cy="4.5" r=".6"/><circle cx="13.5" cy="4.5" r=".6"/><circle cx="16.5" cy="4.5" r=".6"/><circle cx="4.5" cy="7.5" r=".6"/><circle cx="7.5" cy="7.5" r=".6"/><circle cx="13.5" cy="7.5" r=".6"/><circle cx="16.5" cy="7.5" r=".6"/><circle cx="4.5" cy="13.5" r=".6"/><circle cx="7.5" cy="13.5" r=".6"/><circle cx="13.5" cy="13.5" r=".6"/><circle cx="16.5" cy="13.5" r=".6"/><circle cx="4.5" cy="16.5" r=".6"/><circle cx="7.5" cy="16.5" r=".6"/></g><path d="M10.5 2 V19 M2 10.5 H19" stroke="#000" stroke-width="1.2"/><path d="M9.5 4.5 H11.5 M9.5 7.5 H11.5 M9.5 13.5 H11.5 M9.5 16.5 H11.5 M4.5 9.5 V11.5 M7.5 9.5 V11.5 M13.5 9.5 V11.5 M16.5 9.5 V11.5" stroke="#000" stroke-width=".8"/><g transform="translate(13.5 16.5)"><use href="#dd"/></g></g>
<!-- 8 move w/ color bar -->
<g transform="translate(190 857)"><use href="#gbox"/><rect x="1" y="1" width="6.300" height="2.200" fill="#f02010"/><rect x="7.300" y="1" width="6.300" height="2.200" fill="#f0e000"/><rect x="13.600" y="1" width="6.400" height="2.200" fill="#30c030"/><path d="M1 3.700 H20" stroke="#000" stroke-width="1"/><path d="M10 5.500 V17.500 M4 11.500 H16" stroke="#444" stroke-width="1"/><path d="M7.800 7.800 L10 5.500 L12.200 7.800 M7.800 15.200 L10 17.500 L12.200 15.200 M6.300 9.300 L4 11.500 L6.300 13.700 M13.700 9.300 L16 11.500 L13.700 13.700" fill="none" stroke="#444" stroke-width="1"/><g transform="translate(15 17)"><use href="#dd"/></g></g>
<!-- 9 overlapping squares (no right border) -->
<g transform="translate(215 857)"><path d="M20 .5 H.5 V20.5 H20" fill="#fff" stroke="#000"/><rect x="4.5" y="4.5" width="8" height="8" fill="none" stroke="#000" stroke-width="1.1"/><rect x="8" y="8" width="8" height="8" fill="none" stroke="#000" stroke-width="1.1"/></g>
<!-- 10 B -->
<g transform="translate(239 857)"><use href="#wbox"/><rect x="4.5" y="4" width="8.5" height="8.5" fill="#f4f4f4" stroke="#999" stroke-width=".8"/><rect x="7.5" y="7.5" width="9" height="9" fill="#e0e0e0" stroke="#000" stroke-width="1"/><path d="M10.3 9.3 V14.7 H12.5 C14.3 14.7 14.3 12 12.5 12 H10.3 M12.3 12 C13.9 12 13.9 9.3 12.3 9.3 H10.3" fill="none" stroke="#000" stroke-width="1.1"/></g>
<!-- slider -->
<rect x="262.5" y="857.5" width="109" height="18" fill="#aaa"/><path d="M262.5 875.5 V857.5 H371.5" fill="none" stroke="#c8c8c8" stroke-width="1"/><path d="M262.5 875.5 H371.5 V857.5" fill="none" stroke="#eee" stroke-width="1"/>
<rect x="265" y="860" width="28" height="13" fill="#fff"/><path d="M265 873.5 H293.5 V860" fill="none" stroke="#999" stroke-width="1"/><path d="M278.5 860 V873" stroke="#c4c4c4" stroke-width="1"/><path d="M279.5 860 V873" stroke="#fff" stroke-width="1"/>
<!-- F -->
<g transform="translate(376 857)"><use href="#wbox"/><rect x="8" y="7.5" width="8.5" height="9" fill="#ddd" stroke="#888" stroke-width=".8"/><rect x="4.5" y="4" width="9" height="9" fill="#e0e0e0" stroke="#000" stroke-width="1"/><path d="M7.6 11.3 V5.8 H11.2 M7.6 8.5 H10.5" fill="none" stroke="#000" stroke-width="1.2"/></g>
</svg>
<!-- Manipulate 3D View -->
<div class="band" style="left:3px;top:894px;width:398px;height:26px;"></div>
<div class="a" style="left:8px;top:897px;width:0;height:0;border-left:4px solid transparent;border-right:4px solid transparent;border-bottom:4px solid #000;"></div>
<div class="a" style="left:3px;top:920px;width:397px;height:98px;box-sizing:border-box;border:1px solid #9a9a9a;"></div>
<div class="a" style="left:3px;top:1019px;width:398px;height:2px;background:#e4e4fa;"></div>
<!--3D-S--><svg class="a" style="left:0;top:930px" width="404" height="86" viewBox="0 930 404 86" font-family="Liberation Sans, sans-serif">
<defs>
<g id="lbox"><rect x=".5" y=".5" width="20" height="20" fill="#d4ccf0" stroke="#000"/></g>
<g id="cam"><path d="M3.5 8 H6 L7 6.2 H10 V8 H17.5 V16.5 H3.5 Z" fill="#666" stroke="#333" stroke-width=".6"/><circle cx="10.500" cy="12.300" r="3.500" fill="#fff" stroke="#222" stroke-width=".8"/><circle cx="10.500" cy="12.300" r="2.500" fill="#ddd" stroke="#888" stroke-width=".5"/><circle cx="10.500" cy="12.300" r="1.700" fill="#000"/><path d="M4 17.6 H17.5" stroke="#bbb" stroke-width="1"/></g>
<g id="mag"><circle cx="12.5" cy="8" r="4.6" fill="#fff" stroke="#222" stroke-width="1.3"/><path d="M9 11.5 L3.8 17.2" stroke="#222" stroke-width="2.4" stroke-linecap="round"/><path d="M9 11.5 L4 17" stroke="#aaa" stroke-width=".8" stroke-linecap="round"/></g>
<g id="ch"><path d="M-4.500 0 H4.500 M0 -4.500 V4.500" stroke="#555" stroke-width=".6"/><circle cx="0" cy="0" r="2.300" fill="#fff" stroke="#000" stroke-width="1"/><path d="M-2.300 0 H2.300 M0 -2.300 V2.300" stroke="#000" stroke-width=".8"/></g>
<g id="sq2"><rect x="-3" y="-3" width="6" height="6" fill="#fff" stroke="#111" stroke-width="1"/><rect x="-1.2" y="-1.2" width="2.4" height="2.4" fill="none" stroke="#111" stroke-width=".7"/></g>
<g id="glasses"><path d="M4 8 V4.5 C4 3 5.5 3 6 3.5 M17 8 V4.5 C17 3 15.5 3 15 3.5" fill="none" stroke="#111" stroke-width=".9"/><rect x="3.5" y="10" width="5" height="4" fill="#f01010" stroke="#111" stroke-width=".7"/><rect x="12.5" y="10" width="5" height="4" fill="#1080e0" stroke="#111" stroke-width=".7"/><path d="M8.5 11.5 H12.5 M4 8 V10 M17 8 V10" stroke="#111" stroke-width=".9"/></g>
<g id="cams3"><rect x="7" y="9" width="9" height="7" fill="#c8c0c0" stroke="#999" stroke-width=".6"/><rect x="5" y="7" width="9" height="7" fill="#999" stroke="#666" stroke-width=".6"/><path d="M2.5 4.5 H4 L4.6 3.3 H7 V4.5 H11.5 V11 H2.5 Z" fill="#333" stroke="#111" stroke-width=".6"/><circle cx="7" cy="7.8" r="2.2" fill="#ddd" stroke="#000" stroke-width=".9"/><circle cx="7" cy="7.8" r=".9" fill="#000"/></g>
<g id="eye2"><path d="M1 0.500 C2 4.800 8.500 5.500 10.600 0.500 C9.500 3 3.500 3.200 1 0.500 Z" fill="#fff" stroke="#fff" stroke-width="1.200"/><circle cx="6.200" cy="-0.400" r="3.400" fill="#111"/><path d="M4 0 C4.500 -1.500 6 -1.800 6.800 -0.800" fill="none" stroke="#fff" stroke-width=".9"/><path d="M3.500 -2.500 L-0.400 -4.600 M4.500 -3.400 L2.300 -6.400 M6.200 -4 L6 -7.200 M8 -3.400 L9.500 -6.200 M9.300 -2 L11.800 -4 M9.800 -0.700 H13.500" stroke="#444" stroke-width=".6"/></g>
</defs>
<!-- axes box -->
<rect x="10.5" y="938.5" width="65" height="65" fill="#fff" stroke="#8c8c78"/>
<path d="M42.5 950 V991.5 M24.5 971.5 H60.5 M29.3 958.1 L55.7 984.3" stroke="#8c8c78" stroke-width="1"/>
<rect x="41" y="970" width="3" height="3" fill="#000"/>
<g font-size="9.5px" fill="#000"><text x="20.7" y="955.5">P</text><text x="45.5" y="950.8">S</text><text x="63.5" y="970">L</text><text x="18.6" y="980">R</text><text x="36.5" y="996.4">I</text><text x="58.3" y="993.9">A</text></g>
<!-- row 1 -->
<g transform="translate(86 938)"><use href="#wbox"/><path d="M10 3 C4 3 4 17 10 17" fill="none" stroke="#2060d0" stroke-width="2.2"/><path d="M7.5 4.5 C10 2 12 3 12.5 6" fill="none" stroke="#1030a0" stroke-width="1.6"/><path d="M4 4.5 L8 1.5 L8.5 6 Z" fill="#1030a0"/><path d="M8.5 15.5 C7 17.5 5.5 16 5 13" fill="none" stroke="#80a8f0" stroke-width="1.4"/><g transform="translate(13.5 10.5)"><use href="#ch"/></g><path d="M13.5 3 V18" stroke="#999" stroke-width=".5" stroke-dasharray="1.5 1"/><path d="M13.5 10.5 H19" stroke="#000" stroke-width=".9"/></g>
<g transform="translate(113 938)"><use href="#lbox"/><path d="M10.5 1 V6.5 M10.5 14.5 V20 M1 10.5 H6.5 M14.5 10.5 H20" stroke="#000" stroke-width="1"/><rect x="6" y="6" width="9" height="9" fill="#e8e4f8" stroke="#222" stroke-width="1"/><rect x="8.3" y="8.3" width="4.4" height="4.4" fill="#e8e4f8" stroke="#222" stroke-width=".9"/><path d="M6 6 L8.3 8.3 M15 6 L12.7 8.3 M6 15 L8.3 12.7 M15 15 L12.7 12.7" stroke="#222" stroke-width=".6"/></g>
<g transform="translate(140 938)"><use href="#wbox"/><rect x="2.5" y="2.5" width="16" height="14" fill="#a0a0e8" stroke="#000" stroke-width=".9"/><g transform="translate(0 1.5)"><use href="#cam"/></g></g>
<g transform="translate(167 938)"><use href="#wbox"/><use href="#mag"/><path d="M10 8 H15 M12.5 5.5 V10.5" stroke="#111" stroke-width="1.2"/></g>
<rect x="194.5" y="942.5" width="10" height="10" fill="#c8d4e8" stroke="#c8c8c8" stroke-width="1"/>
<g transform="translate(209 937)"><rect x=".5" y=".5" width="20" height="20" fill="#d4ccf0" stroke="#999" stroke-dasharray="1 1.4"/><g transform="translate(10.5 9.5)"><use href="#sq2"/></g><path d="M4 17 C1 12 2 5 7 2.5" fill="none" stroke="#555" stroke-width="1"/><path d="M14 17.5 C19 15 20 8 17 3.5" fill="none" stroke="#555" stroke-width="1"/><path d="M2 18.5 L2.5 14.5 L6 17 Z M18.8 2 L18.5 6 L15 3.6 Z" fill="#111"/></g>
<!-- row 2 -->
<g transform="translate(86 961)"><use href="#wbox"/><path d="M4 14.5 C-.5 6 7 .5 13.5 3.5 C18.5 6 18.5 12 16.5 15" fill="none" stroke="#3038b0" stroke-width="1.6"/><path d="M5.5 16 C2.5 13 2 8 4 5.5" fill="none" stroke="#90a8e8" stroke-width="1.6"/><path d="M12.5 13 H18.8 V19 L16 16.5 Z" fill="#1840b0"/><path d="M12.5 17.5 H19" stroke="#1840b0" stroke-width="1.4"/><g transform="translate(9.5 9.5)"><use href="#ch"/></g></g>
<g transform="translate(113 961)"><use href="#lbox"/><path d="M3.5 7.500 H13.5 V17.5 H3.5 Z" fill="#fff" stroke="#111" stroke-width="1.1"/><path d="M3.5 7.500 L7.5 3.500 H17.5 L13.5 7.500 M17.5 3.500 V13.500 L13.5 17.5" fill="#f4f2fa" stroke="#111" stroke-width="1.1"/><path d="M7.5 3.500 V13.500 H17.5 M7.5 13.500 L3.5 17.5" fill="none" stroke="#777" stroke-width=".6"/></g>
<g transform="translate(140 961)"><use href="#wbox"/><use href="#cam"/></g>
<g transform="translate(167 961)"><use href="#wbox"/><use href="#mag"/><path d="M10 8 H15" stroke="#111" stroke-width="1.3"/></g>
<rect x="194.500" y="965.500" width="10" height="10" fill="#c8d4e8" stroke="#c8c8c8" stroke-width="1"/>
<g id="rock" transform="translate(209 960)"><rect x=".5" y=".5" width="20" height="20" fill="#d4ccf0" stroke="#999" stroke-dasharray="1 1.4"/><g transform="translate(10.5 6)"><use href="#sq2"/></g><path d="M3.5 14 C7 18.5 14 18.5 17.500 14" fill="none" stroke="#555" stroke-width="1.1"/><path d="M1.8 11.5 L5.800 12.2 L2.6 15.500 Z M19.2 11.5 L15.2 12.2 L18.4 15.500 Z" fill="#111"/></g>
<!-- row 3 -->
<g transform="translate(86 984)"><use href="#wbox"/><g transform="translate(10.5 7)"><use href="#ch"/></g><path d="M10.5 1.500 V16" stroke="#000" stroke-width="1"/><path d="M2.5 7 H18.500" stroke="#999" stroke-width=".5" stroke-dasharray="1.500 1"/><path d="M4 13 C7 18.500 15.500 18.500 17.500 12.500" fill="none" stroke="#2060d0" stroke-width="2"/><path d="M12 12 C15.500 11 17.500 12 17.800 13" fill="none" stroke="#80a8f0" stroke-width="1.300"/><path d="M2.500 11.500 H7.500 L3 16.500 Z" fill="#1030a0"/></g>
<g transform="translate(111 983)"><use href="#lbox"/><g transform="translate(4 10.500)"><use href="#eye2"/></g><g transform="translate(13.500 16.500)"><use href="#dd"/></g></g>
<g transform="translate(138 983)"><use href="#wbox"/><use href="#cams3"/><g transform="translate(13.500 16.500)"><use href="#dd"/></g></g>
<g transform="translate(165 983)"><use href="#wbox"/><use href="#glasses"/><g transform="translate(13.500 16.500)"><use href="#dd"/></g></g>
<!-- right mini panel -->
<rect x="240" y="942" width="150" height="3" fill="#e0dfe3"/><rect x="240" y="945" width="150" height="1" fill="#aaa"/>
<path d="M244 953.500 H265 M271 953.500 H292 M298 953.500 H319 M325 953.500 H346" stroke="#000" stroke-width="1"/>
<g transform="translate(244 956)"><use href="#wbox"/><path d="M4 14.500 C-.5 6 7 .5 13.500 3.500 C18.500 6 18.500 12 16.500 15" fill="none" stroke="#3038b0" stroke-width="1.600"/><path d="M5.500 16 C2.500 13 2 8 4 5.500" fill="none" stroke="#90a8e8" stroke-width="1.600"/><path d="M12.500 13 H18.800 V19 L16 16.500 Z" fill="#1840b0"/><path d="M12.500 17.500 H19" stroke="#1840b0" stroke-width="1.400"/><g transform="translate(9.500 9.500)"><use href="#ch"/></g></g>
<g transform="translate(271 956)"><use href="#lbox"/><path d="M3.500 7.500 H13.500 V17.500 H3.500 Z" fill="#fff" stroke="#111" stroke-width="1.100"/><path d="M3.500 7.500 L7.500 3.500 H17.500 L13.500 7.500 M17.500 3.500 V13.500 L13.500 17.500" fill="#f4f2fa" stroke="#111" stroke-width="1.100"/><path d="M7.500 3.500 V13.500 H17.500 M7.500 13.500 L3.500 17.500" fill="none" stroke="#777" stroke-width=".6"/></g>
<g transform="translate(298 956)"><use href="#wbox"/><use href="#cam"/></g>
<g transform="translate(325 956)"><use href="#wbox"/><use href="#mag"/><path d="M10 8 H15" stroke="#111" stroke-width="1.300"/></g>
<rect x="352.500" y="960.500" width="10" height="10" fill="#c8d4e8" stroke="#c8c8c8" stroke-width="1"/>
<g transform="translate(367 955)"><rect x=".5" y=".5" width="20" height="20" fill="#d4ccf0" stroke="#999" stroke-dasharray="1 1.400"/><g transform="translate(10.500 6)"><use href="#sq2"/></g><path d="M3.500 14 C7 18.500 14 18.500 17.500 14" fill="none" stroke="#555" stroke-width="1.100"/><path d="M1.800 11.500 L5.800 12.200 L2.600 15.500 Z M19.200 11.500 L15.200 12.200 L18.400 15.500 Z" fill="#111"/></g>
<!-- clipped row -->
<svg x="240" y="978" width="150" height="14" viewBox="240 978 150 14">
<g transform="translate(244 978)"><use href="#wbox"/><g transform="translate(10.500 7)"><use href="#ch"/></g><path d="M10.500 1.500 V16" stroke="#000" stroke-width="1"/><path d="M2.500 7 H18.500" stroke="#999" stroke-width=".5" stroke-dasharray="1.500 1"/><path d="M4 13 C7 18.500 15.500 18.500 17.500 12.500" fill="none" stroke="#2060d0" stroke-width="2"/><path d="M12 12 C15.500 11 17.500 12 17.800 13" fill="none" stroke="#80a8f0" stroke-width="1.300"/><path d="M2.500 11.500 H7.500 L3 16.500 Z" fill="#1030a0"/></g>
<g transform="translate(269 978)"><use href="#lbox"/><g transform="translate(4 10.500)"><use href="#eye2"/></g></g>
<g transform="translate(296 978)"><use href="#wbox"/><use href="#cams3"/></g>
<g transform="translate(323 978)"><use href="#wbox"/><use href="#glasses"/></g>
</svg>
<rect x="240" y="1003" width="150" height="1" fill="#e8e4fa"/>
<rect x="240" y="1005" width="24" height="2" fill="#000"/><rect x="280" y="1005" width="24" height="2" fill="#000"/><rect x="304" y="1005" width="64" height="2" fill="#c0d0ec"/><rect x="368" y="1005" width="22" height="2" fill="#000"/>
<rect x="240" y="1010" width="150" height="1" fill="#e8e4fa"/>
</svg>
<!--3D-E-->

<!-- VIEWER -->
<!-- vertical split bar -->
<div class="a" style="left:404px;top:123px;width:4px;height:897px;box-sizing:border-box;border:1px solid;border-color:#f0f0f0 #8c8c8c #8c8c8c #f0f0f0;border-right-width:2px;background:#dcdcdc;"></div>
<div class="a" style="left:405px;top:105px;width:0;height:0;border-top:2.500px solid transparent;border-bottom:2.500px solid transparent;border-right:3px solid #000;"></div>
<div class="a" style="left:405px;top:116px;width:0;height:0;border-top:2.500px solid transparent;border-bottom:2.500px solid transparent;border-left:3px solid #000;"></div>
<!-- viewer frame -->
<div class="a" style="left:410px;top:101px;width:1269px;height:913px;box-sizing:border-box;border:2px solid #dcdcdc;background:#dce6e8;"></div>
<div class="a" style="left:412px;top:103px;width:1264px;height:9px;background:#ff2a10;"></div>
<div class="a" style="left:412px;top:112px;width:1266px;height:1px;background:#8ca0a0;"></div>
<div class="a" style="left:412px;top:103px;width:1px;height:908px;background:#b0b0b0;"></div>
<div class="a" style="left:414px;top:114px;width:1262px;height:897px;background:#ff2000;"></div>
<div class="a" id="view" style="left:416px;top:117px;width:1260px;height:894px;background:#000;overflow:hidden;">
<svg class="a" style="left:0;top:0" width="1260" height="894" viewBox="416 117 1260 894">
<defs>
<filter id="b1" x="-10%" y="-10%" width="120%" height="120%"><feGaussianBlur stdDeviation="1.6"/></filter>
<filter id="bm1" x="-10%" y="-10%" width="120%" height="120%"><feGaussianBlur stdDeviation="2.4"/></filter>
<filter id="bmk" x="-10%" y="-10%" width="120%" height="120%"><feTurbulence type="fractalNoise" baseFrequency="0.028" numOctaves="2" seed="21" result="n"/><feDisplacementMap in="SourceGraphic" in2="n" scale="16" xChannelSelector="R" yChannelSelector="G"/><feGaussianBlur stdDeviation="2.6"/></filter>
<filter id="b2" x="-20%" y="-20%" width="140%" height="140%"><feGaussianBlur stdDeviation="3"/></filter>
<filter id="b4" x="-30%" y="-30%" width="160%" height="160%"><feGaussianBlur stdDeviation="6"/></filter>
<filter id="b8" x="-40%" y="-40%" width="180%" height="180%"><feGaussianBlur stdDeviation="12"/></filter>
<filter id="b16" x="-50%" y="-50%" width="200%" height="200%"><feGaussianBlur stdDeviation="22"/></filter>
<filter id="tx" x="0" y="0" width="100%" height="100%" color-interpolation-filters="sRGB"><feTurbulence type="fractalNoise" baseFrequency="0.04" numOctaves="2" seed="11" result="n"/><feColorMatrix in="n" type="matrix" values="1.25 0 0 0 -.125  1.25 0 0 0 -.125  1.25 0 0 0 -.125  0 0 0 0 1"/><feGaussianBlur stdDeviation="2.4"/></filter>
<filter id="tx2" x="0" y="0" width="100%" height="100%" color-interpolation-filters="sRGB"><feTurbulence type="turbulence" baseFrequency="0.035" numOctaves="1" seed="5" result="n"/><feColorMatrix in="n" type="matrix" values="0 0 0 0 1  0 0 0 0 1  0 0 0 0 1  -5 0 0 0 .9"/><feGaussianBlur stdDeviation="2.2"/></filter>
<mask id="bm" maskUnits="userSpaceOnUse" x="416" y="117" width="1260" height="894"><path d="M975.0 265.0 C977.7 265.0 981.5 266.0 984.0 268.0 C986.5 270.0 987.7 273.7 990.0 277.0 C992.3 280.3 994.8 284.3 998.0 288.0 C1001.2 291.7 1005.7 295.2 1009.0 299.0 C1012.3 302.8 1016.0 308.7 1018.0 311.0 C1020.0 313.3 1019.8 314.5 1021.0 313.0 C1022.2 311.5 1022.8 307.2 1025.0 302.0 C1027.2 296.8 1030.7 287.7 1034.0 282.0 C1037.3 276.3 1041.7 271.2 1045.0 268.0 C1048.3 264.8 1050.7 262.3 1054.0 263.0 C1057.3 263.7 1061.2 268.2 1065.0 272.0 C1068.8 275.8 1070.2 278.0 1077.0 286.0 C1083.8 294.0 1096.5 310.0 1106.0 320.0 C1115.5 330.0 1125.0 337.8 1134.0 346.0 C1143.0 354.2 1152.3 361.5 1160.0 369.0 C1167.7 376.5 1174.3 383.5 1180.0 391.0 C1185.7 398.5 1190.7 405.3 1194.0 414.0 C1197.3 422.7 1198.5 432.5 1200.0 443.0 C1201.5 453.5 1201.5 466.5 1203.0 477.0 C1204.5 487.5 1206.2 495.0 1209.0 506.0 C1211.8 517.0 1215.8 530.2 1220.0 543.0 C1224.2 555.8 1229.2 570.2 1234.0 583.0 C1238.8 595.8 1244.2 609.0 1249.0 620.0 C1253.8 631.0 1259.5 638.5 1263.0 649.0 C1266.5 659.5 1269.3 671.7 1270.0 683.0 C1270.7 694.3 1268.2 708.3 1267.0 717.0 C1265.8 725.7 1264.8 727.8 1263.0 735.0 C1261.2 742.2 1259.5 752.0 1256.0 760.0 C1252.5 768.0 1246.5 775.8 1242.0 783.0 C1237.5 790.2 1235.0 795.3 1229.0 803.0 C1223.0 810.7 1213.7 821.8 1206.0 829.0 C1198.3 836.2 1191.7 840.3 1183.0 846.0 C1174.3 851.7 1163.5 857.8 1154.0 863.0 C1144.5 868.2 1136.5 872.7 1126.0 877.0 C1115.5 881.3 1100.5 887.8 1091.0 889.0 C1081.5 890.2 1075.5 887.0 1069.0 884.0 C1062.5 881.0 1056.3 875.3 1052.0 871.0 C1047.7 866.7 1046.2 857.8 1043.0 858.0 C1039.8 858.2 1039.2 867.3 1033.0 872.0 C1026.8 876.7 1015.3 884.7 1006.0 886.0 C996.7 887.3 984.7 882.8 977.0 880.0 C969.3 877.2 968.0 873.3 960.0 869.0 C952.0 864.7 940.5 859.3 929.0 854.0 C917.5 848.7 902.0 845.5 891.0 837.0 C880.0 828.5 870.5 812.5 863.0 803.0 C855.5 793.5 851.7 789.5 846.0 780.0 C840.3 770.5 833.8 758.3 829.0 746.0 C824.2 733.7 820.0 720.3 817.0 706.0 C814.0 691.7 811.5 674.3 811.0 660.0 C810.5 645.7 811.5 632.3 814.0 620.0 C816.5 607.7 822.2 598.8 826.0 586.0 C829.8 573.2 834.5 557.3 837.0 543.0 C839.5 528.7 840.0 514.3 841.0 500.0 C842.0 485.7 841.7 470.3 843.0 457.0 C844.3 443.7 846.7 431.3 849.0 420.0 C851.3 408.7 852.8 398.0 857.0 389.0 C861.2 380.0 865.3 373.7 874.0 366.0 C882.7 358.3 899.8 351.7 909.0 343.0 C918.2 334.3 922.0 322.2 929.0 314.0 C936.0 305.8 945.3 300.3 951.0 294.0 C956.7 287.7 960.2 280.3 963.0 276.0 C965.8 271.7 966.0 269.8 968.0 268.0 C970.0 266.2 972.3 265.0 975.0 265.0 Z" fill="#fff" filter="url(#bmk)" transform="translate(2 2)"/></mask>
</defs>
<g fill="none" stroke-linecap="round" filter="url(#b1)" opacity=".55">
<path d="M1060.0 232.0 C1053.3 231.3 1032.5 227.3 1020.0 228.0 C1007.5 228.7 996.7 232.3 985.0 236.0 C973.3 239.7 963.3 241.0 950.0 250.0 C936.7 259.0 920.0 274.2 905.0 290.0 C890.0 305.8 871.7 326.7 860.0 345.0 C848.3 363.3 843.3 379.2 835.0 400.0 C826.7 420.8 817.5 445.0 810.0 470.0 C802.5 495.0 795.3 521.7 790.0 550.0 C784.7 578.3 780.3 611.7 778.0 640.0 C775.7 668.3 775.3 695.0 776.0 720.0 C776.7 745.0 778.0 768.3 782.0 790.0 C786.0 811.7 792.8 830.8 800.0 850.0 C807.2 869.2 816.7 890.0 825.0 905.0 C833.3 920.0 844.2 932.8 850.0 940.0 C855.8 947.2 858.3 946.7 860.0 948.0" stroke="#151515" stroke-width="4" stroke-dasharray="7 19 3 14 10 23 5 30"/>
<path d="M1277.0 543.0 C1280.0 552.5 1289.8 582.2 1295.0 600.0 C1300.2 617.8 1304.5 632.5 1308.0 650.0 C1311.5 667.5 1315.3 689.2 1316.0 705.0 C1316.7 720.8 1314.7 731.7 1312.0 745.0 C1309.3 758.3 1305.3 772.2 1300.0 785.0 C1294.7 797.8 1288.0 810.8 1280.0 822.0 C1272.0 833.2 1262.8 842.7 1252.0 852.0 C1241.2 861.3 1228.7 871.3 1215.0 878.0 C1201.3 884.7 1185.8 888.3 1170.0 892.0 C1154.2 895.7 1136.7 897.7 1120.0 900.0 C1103.3 902.3 1078.3 905.0 1070.0 906.0" stroke="#242424" stroke-width="4" stroke-dasharray="14 10 6 12 22 9 4 15"/>
<path d="M940 255 C980 232 1030 226 1070 236" stroke="#1a1a1a" stroke-width="4" stroke-dasharray="12 9 5 14"/>
<path d="M1000 905 C1040 915 1090 915 1130 905" stroke="#1c1c1c" stroke-width="5" stroke-dasharray="12 9"/>
<path d="M1228 560 C1245 610 1275 660 1285 720 C1290 770 1270 810 1240 840" stroke="#161616" stroke-width="5" stroke-dasharray="6 12"/>
</g>
<g mask="url(#bm)">
<path d="M975.0 265.0 C977.7 265.0 981.5 266.0 984.0 268.0 C986.5 270.0 987.7 273.7 990.0 277.0 C992.3 280.3 994.8 284.3 998.0 288.0 C1001.2 291.7 1005.7 295.2 1009.0 299.0 C1012.3 302.8 1016.0 308.7 1018.0 311.0 C1020.0 313.3 1019.8 314.5 1021.0 313.0 C1022.2 311.5 1022.8 307.2 1025.0 302.0 C1027.2 296.8 1030.7 287.7 1034.0 282.0 C1037.3 276.3 1041.7 271.2 1045.0 268.0 C1048.3 264.8 1050.7 262.3 1054.0 263.0 C1057.3 263.7 1061.2 268.2 1065.0 272.0 C1068.8 275.8 1070.2 278.0 1077.0 286.0 C1083.8 294.0 1096.5 310.0 1106.0 320.0 C1115.5 330.0 1125.0 337.8 1134.0 346.0 C1143.0 354.2 1152.3 361.5 1160.0 369.0 C1167.7 376.5 1174.3 383.5 1180.0 391.0 C1185.7 398.5 1190.7 405.3 1194.0 414.0 C1197.3 422.7 1198.5 432.5 1200.0 443.0 C1201.5 453.5 1201.5 466.5 1203.0 477.0 C1204.5 487.5 1206.2 495.0 1209.0 506.0 C1211.8 517.0 1215.8 530.2 1220.0 543.0 C1224.2 555.8 1229.2 570.2 1234.0 583.0 C1238.8 595.8 1244.2 609.0 1249.0 620.0 C1253.8 631.0 1259.5 638.5 1263.0 649.0 C1266.5 659.5 1269.3 671.7 1270.0 683.0 C1270.7 694.3 1268.2 708.3 1267.0 717.0 C1265.8 725.7 1264.8 727.8 1263.0 735.0 C1261.2 742.2 1259.5 752.0 1256.0 760.0 C1252.5 768.0 1246.5 775.8 1242.0 783.0 C1237.5 790.2 1235.0 795.3 1229.0 803.0 C1223.0 810.7 1213.7 821.8 1206.0 829.0 C1198.3 836.2 1191.7 840.3 1183.0 846.0 C1174.3 851.7 1163.5 857.8 1154.0 863.0 C1144.5 868.2 1136.5 872.7 1126.0 877.0 C1115.5 881.3 1100.5 887.8 1091.0 889.0 C1081.5 890.2 1075.5 887.0 1069.0 884.0 C1062.5 881.0 1056.3 875.3 1052.0 871.0 C1047.7 866.7 1046.2 857.8 1043.0 858.0 C1039.8 858.2 1039.2 867.3 1033.0 872.0 C1026.8 876.7 1015.3 884.7 1006.0 886.0 C996.7 887.3 984.7 882.8 977.0 880.0 C969.3 877.2 968.0 873.3 960.0 869.0 C952.0 864.7 940.5 859.3 929.0 854.0 C917.5 848.7 902.0 845.5 891.0 837.0 C880.0 828.5 870.5 812.5 863.0 803.0 C855.5 793.5 851.7 789.5 846.0 780.0 C840.3 770.5 833.8 758.3 829.0 746.0 C824.2 733.7 820.0 720.3 817.0 706.0 C814.0 691.7 811.5 674.3 811.0 660.0 C810.5 645.7 811.5 632.3 814.0 620.0 C816.5 607.7 822.2 598.8 826.0 586.0 C829.8 573.2 834.5 557.3 837.0 543.0 C839.5 528.7 840.0 514.3 841.0 500.0 C842.0 485.7 841.7 470.3 843.0 457.0 C844.3 443.7 846.7 431.3 849.0 420.0 C851.3 408.7 852.8 398.0 857.0 389.0 C861.2 380.0 865.3 373.7 874.0 366.0 C882.7 358.3 899.8 351.7 909.0 343.0 C918.2 334.3 922.0 322.2 929.0 314.0 C936.0 305.8 945.3 300.3 951.0 294.0 C956.7 287.7 960.2 280.3 963.0 276.0 C965.8 271.7 966.0 269.8 968.0 268.0 C970.0 266.2 972.3 265.0 975.0 265.0 Z" fill="#727272"/>
<g filter="url(#b16)">
<ellipse cx="895" cy="390" rx="50" ry="55" fill="#c0c0c0"/>
<ellipse cx="975" cy="310" rx="35" ry="40" fill="#8c8c8c"/>
<ellipse cx="880" cy="540" rx="50" ry="90" fill="#909090"/>
<ellipse cx="870" cy="710" rx="55" ry="100" fill="#8c8c8c"/>
<ellipse cx="1215" cy="760" rx="50" ry="90" fill="#bcbcbc"/>
<ellipse cx="1110" cy="858" rx="70" ry="35" fill="#c8c8c8"/>
<ellipse cx="1085" cy="770" rx="35" ry="60" fill="#888888"/>
<ellipse cx="990" cy="810" rx="60" ry="70" fill="#989898"/>
<ellipse cx="1030" cy="560" rx="85" ry="110" fill="#505050"/>
<ellipse cx="1020" cy="445" rx="95" ry="28" fill="#3c3c3c"/>
<ellipse cx="1115" cy="370" rx="70" ry="80" fill="#585858"/>
<ellipse cx="1060" cy="300" rx="30" ry="40" fill="#6a6a6a"/>
<ellipse cx="1200" cy="560" rx="40" ry="90" fill="#8c8c8c"/>
<ellipse cx="960" cy="690" rx="50" ry="28" fill="#3c3c3c"/>
<ellipse cx="1120" cy="690" rx="40" ry="45" fill="#4c4c4c"/>
<ellipse cx="1040" cy="665" rx="50" ry="16" fill="#8a8a8a"/>
</g>
<g filter="url(#b8)">
<ellipse cx="1018" cy="390" rx="30" ry="42" fill="#c4c4c4"/>
<ellipse cx="968" cy="625" rx="14" ry="24" fill="#b0b0b0"/>
</g>
<g filter="url(#b4)">
<ellipse cx="1210" cy="818" rx="26" ry="22" fill="#ffffff" transform="rotate(-35 1210 818)"/>
<ellipse cx="1212" cy="762" rx="22" ry="18" fill="#e4e4e4"/>
<ellipse cx="1140" cy="772" rx="13" ry="36" fill="#484848" fill-opacity=".9" transform="rotate(12 1140 772)"/>
<ellipse cx="1090" cy="850" rx="40" ry="16" fill="#e8e8e8" transform="rotate(-8 1090 850)"/>
</g>
<path d="M975.0 265.0 C977.7 265.0 981.5 266.0 984.0 268.0 C986.5 270.0 987.7 273.7 990.0 277.0 C992.3 280.3 994.8 284.3 998.0 288.0 C1001.2 291.7 1005.7 295.2 1009.0 299.0 C1012.3 302.8 1016.0 308.7 1018.0 311.0 C1020.0 313.3 1019.8 314.5 1021.0 313.0 C1022.2 311.5 1022.8 307.2 1025.0 302.0 C1027.2 296.8 1030.7 287.7 1034.0 282.0 C1037.3 276.3 1041.7 271.2 1045.0 268.0 C1048.3 264.8 1050.7 262.3 1054.0 263.0 C1057.3 263.7 1061.2 268.2 1065.0 272.0 C1068.8 275.8 1070.2 278.0 1077.0 286.0 C1083.8 294.0 1096.5 310.0 1106.0 320.0 C1115.5 330.0 1125.0 337.8 1134.0 346.0 C1143.0 354.2 1152.3 361.5 1160.0 369.0 C1167.7 376.5 1174.3 383.5 1180.0 391.0 C1185.7 398.5 1190.7 405.3 1194.0 414.0 C1197.3 422.7 1198.5 432.5 1200.0 443.0 C1201.5 453.5 1201.5 466.5 1203.0 477.0 C1204.5 487.5 1206.2 495.0 1209.0 506.0 C1211.8 517.0 1215.8 530.2 1220.0 543.0 C1224.2 555.8 1229.2 570.2 1234.0 583.0 C1238.8 595.8 1244.2 609.0 1249.0 620.0 C1253.8 631.0 1259.5 638.5 1263.0 649.0 C1266.5 659.5 1269.3 671.7 1270.0 683.0 C1270.7 694.3 1268.2 708.3 1267.0 717.0 C1265.8 725.7 1264.8 727.8 1263.0 735.0 C1261.2 742.2 1259.5 752.0 1256.0 760.0 C1252.5 768.0 1246.5 775.8 1242.0 783.0 C1237.5 790.2 1235.0 795.3 1229.0 803.0 C1223.0 810.7 1213.7 821.8 1206.0 829.0 C1198.3 836.2 1191.7 840.3 1183.0 846.0 C1174.3 851.7 1163.5 857.8 1154.0 863.0 C1144.5 868.2 1136.5 872.7 1126.0 877.0 C1115.5 881.3 1100.5 887.8 1091.0 889.0 C1081.5 890.2 1075.5 887.0 1069.0 884.0 C1062.5 881.0 1056.3 875.3 1052.0 871.0 C1047.7 866.7 1046.2 857.8 1043.0 858.0 C1039.8 858.2 1039.2 867.3 1033.0 872.0 C1026.8 876.7 1015.3 884.7 1006.0 886.0 C996.7 887.3 984.7 882.8 977.0 880.0 C969.3 877.2 968.0 873.3 960.0 869.0 C952.0 864.7 940.5 859.3 929.0 854.0 C917.5 848.7 902.0 845.5 891.0 837.0 C880.0 828.5 870.5 812.5 863.0 803.0 C855.5 793.5 851.7 789.5 846.0 780.0 C840.3 770.5 833.8 758.3 829.0 746.0 C824.2 733.7 820.0 720.3 817.0 706.0 C814.0 691.7 811.5 674.3 811.0 660.0 C810.5 645.7 811.5 632.3 814.0 620.0 C816.5 607.7 822.2 598.8 826.0 586.0 C829.8 573.2 834.5 557.3 837.0 543.0 C839.5 528.7 840.0 514.3 841.0 500.0 C842.0 485.7 841.7 470.3 843.0 457.0 C844.3 443.7 846.7 431.3 849.0 420.0 C851.3 408.7 852.8 398.0 857.0 389.0 C861.2 380.0 865.3 373.7 874.0 366.0 C882.7 358.3 899.8 351.7 909.0 343.0 C918.2 334.3 922.0 322.2 929.0 314.0 C936.0 305.8 945.3 300.3 951.0 294.0 C956.7 287.7 960.2 280.3 963.0 276.0 C965.8 271.7 966.0 269.8 968.0 268.0 C970.0 266.2 972.3 265.0 975.0 265.0 Z" fill="none" stroke="#c0c0c0" stroke-opacity=".3" stroke-width="18" filter="url(#b4)"/>
<rect x="780" y="240" width="520" height="680" filter="url(#tx)" style="mix-blend-mode:overlay" opacity=".85"/>
<rect x="780" y="240" width="520" height="680" fill="#fff" filter="url(#tx2)" opacity=".1"/>
<g fill="none" stroke-linecap="round" stroke-linejoin="round" filter="url(#b2)" opacity=".9">
<path d="M1012 322 C1013 340 1014 355 1014 368 M1030 330 C1032 345 1034 360 1040 372" stroke="#dcdcdc" stroke-width="7"/>
<g stroke="none" fill="#e6e6e6"><ellipse cx="997" cy="372" rx="13" ry="11"/><ellipse cx="1043" cy="364" rx="15" ry="14" fill="#c8c8c8"/><ellipse cx="996" cy="404" rx="15" ry="8"/><ellipse cx="1042" cy="402" rx="12" ry="12"/><ellipse cx="1012" cy="428" rx="14" ry="8"/><ellipse cx="1040" cy="430" rx="10" ry="7"/></g>
<path d="M988 404 H1004 M1036 398 L1046 406 M1005 388 L1014 394" stroke="#505050" stroke-width="3"/>
<path d="M852 512 C870 505 885 512 892 522 C880 530 872 540 884 548 C896 556 900 566 890 576 M850 560 C862 556 872 560 876 570" stroke="#dcdcdc" stroke-width="5"/>
<path d="M1142 540 C1150 528 1164 528 1168 540 C1172 560 1170 590 1160 615 C1150 640 1146 652 1150 660 M1180 600 C1190 592 1204 596 1208 606" stroke="#d8d8d8" stroke-width="5"/>
<path d="M1240 786 C1225 812 1195 836 1150 858 C1125 870 1100 880 1072 878" stroke="#ffffff" stroke-width="15"/><path d="M1264 672 C1266 690 1264 705 1260 722" stroke="#f0f0f0" stroke-width="7"/>
<path d="M1170 760 C1190 745 1215 750 1225 765 C1215 785 1195 790 1180 785 M1160 800 C1180 790 1200 800 1205 812" stroke="#f4f4f4" stroke-width="7"/>
<path d="M905 820 C930 842 960 858 1000 872" stroke="#c4c4c4" stroke-width="10" stroke-opacity=".7"/>
<path d="M1052 740 V850" stroke="#e8e8e8" stroke-width="5"/>
<path d="M990 683 C1005 666 1025 659 1040 661 C1065 665 1090 680 1104 700" stroke="#a0a0a0" stroke-width="9" stroke-opacity=".8"/>
</g>
<g fill="#000" stroke="#000" stroke-linecap="round" stroke-linejoin="round" filter="url(#bm1)" opacity=".92">
<path d="M1021 300 L1022 440" fill="none" stroke-width="3.5" stroke-opacity=".85"/>
<path d="M1008 478 C1016 492 1018 505 1014 520 C1011 535 1013 548 1019 556 C1022 545 1022 530 1023 518 C1024 505 1020 490 1008 478 Z" stroke-width="2"/>
<path d="M1046 482 C1038 496 1036 508 1040 522 C1043 536 1043 548 1047 556 C1049 546 1048 532 1046 520 C1043 506 1044 494 1046 482 Z" stroke-width="2"/>
<path d="M1034 631 L1020 652 L1046 652 Z" stroke-width="3"/>
<path d="M943 712 C946 700 958 690 970 684 C982 676 992 664 1002 656 C1000 668 990 682 978 692 C968 702 954 712 943 712 Z" stroke-width="5" stroke-opacity=".7" fill-opacity=".85" filter="url(#b2)"/>
<path d="M1019 692 L1061 696 L1051 712 L1051 738 L1045 752 L1039 738 L1038 712 Z" stroke-width="2"/>
<path d="M1045 745 L1044 858" fill="none" stroke-width="3.500" stroke-opacity=".85"/>
<path d="M1104 680 C1112 695 1122 715 1128 730" fill="none" stroke-width="7" stroke-opacity=".85"/>
<path d="M1160 615 C1164 625 1166 632 1164 640" fill="none" stroke-width="5" stroke-opacity=".8"/>
</g>
<g fill="none" stroke="#000" stroke-linecap="round" filter="url(#b2)" stroke-opacity=".55">
<path d="M955 330 C965 360 960 390 950 410" stroke-width="8" stroke-opacity=".6"/>
<path d="M930 470 C950 500 960 540 950 590" stroke-width="9"/>
<path d="M1090 470 C1080 510 1085 560 1100 600 C1110 630 1100 660 1090 680" stroke-width="10"/>
<path d="M1060 330 C1066 350 1070 372 1068 392" stroke-width="7"/>
<path d="M1110 760 C1120 790 1115 810 1105 830" stroke-width="8"/>
</g>
</g>
</svg>
</div>
<div class="a" style="left:1041px;top:106px;width:0;height:0;border-left:4px solid transparent;border-right:4px solid transparent;border-top:4px solid #000;"></div>
<!-- bottom split bar -->
<div class="a" style="left:432px;top:1015px;width:1246px;height:4px;box-sizing:border-box;border:1px solid;border-color:#f0f0f0 #8c8c8c #8c8c8c #f0f0f0;border-bottom-width:2px;background:#dcdcdc;"></div>
<div class="a" style="left:425px;top:1016px;width:0;height:0;border-left:2.500px solid transparent;border-right:2.500px solid transparent;border-bottom:3px solid #000;"></div>
<svg class="a" style="left:412px;top:1014px" width="10" height="8" viewBox="0 0 10 8"><path d="M3 2.200 L4.800 4 L6.600 2.200" fill="none" stroke="#000" stroke-width="1.100"/></svg>

<!-- STATUS -->
<div class="t" style="left:765.4px;top:4.7px;font-size:13px;letter-spacing:-0.178px;color:#1a1a1a;font-family:'DejaVu Sans',sans-serif;">3D Slicer Version 3.5 Alpha</div>
<div class="t" style="left:11.3px;top:33.7px;font-size:15px;letter-spacing:0.043px;"><u>F</u>ile</div>
<div class="t" style="left:52.3px;top:33.7px;font-size:15px;letter-spacing:0.551px;"><u>E</u>dit</div>
<div class="t" style="left:97.2px;top:33.7px;font-size:15px;letter-spacing:0.519px;"><u>V</u>iew</div>
<div class="t" style="left:148.2px;top:33.7px;font-size:15px;letter-spacing:0.390px;"><u>W</u>indow</div>
<div class="t" style="left:220.5px;top:33.7px;font-size:15px;letter-spacing:0.383px;"><u>H</u>elp</div>
<div class="t" style="left:270.0px;top:33.7px;font-size:15px;letter-spacing:0.518px;">Feedback</div>
<div class="t" style="left:82.6px;top:77.7px;font-size:13px;letter-spacing:0.021px;">Modules:</div>
<div class="t" style="left:159.8px;top:77.6px;font-size:13px;letter-spacing:0.057px;">Joint Rician LMMSE Image Filter</div>
<div class="t" style="left:507.5px;top:77.7px;font-size:13px;letter-spacing:-0.716px;color:#8a8a8a;font-family:'DejaVu Sans',sans-serif;">search modules</div>
<div class="t" style="left:71.9px;top:128.7px;font-size:13px;letter-spacing:-1.019px;color:#777;">3D</div>
<div class="t" style="left:89.6px;top:128.7px;font-size:13px;letter-spacing:2.038px;color:#111;">Slicer</div>
<div class="t" style="left:27.0px;top:189.3px;font-size:16px;letter-spacing:-0.064px;">Help &amp; Acknowledgement</div>
<div class="t" style="left:26.5px;top:222.3px;font-size:16px;letter-spacing:-0.076px;">Joint Rician LMMSE Image Filter</div>
<div class="t" style="left:207.0px;top:257.1px;font-size:16px;letter-spacing:0.043px;">Parameter set</div>
<div class="t" style="left:319.5px;top:260.3px;font-size:16px;">r</div>
<div class="t" style="left:258.0px;top:296.2px;font-size:16px;letter-spacing:0.188px;">Status</div>
<div class="t" style="left:311.7px;top:296.2px;font-size:16px;letter-spacing:-0.085px;">Completed</div>
<div class="t" style="left:33.0px;top:324.5px;font-size:16px;letter-spacing:-0.044px;">DWI Noise Removal Parameters</div>
<div class="t" style="left:69.0px;top:355.9px;font-size:16px;letter-spacing:-0.122px;">Estimation Radius</div>
<div class="t" style="left:203.0px;top:355.9px;font-size:16px;letter-spacing:0.728px;">2,2,1</div>
<div class="t" style="left:88.7px;top:384.9px;font-size:16px;letter-spacing:-0.257px;">Filtering Radius</div>
<div class="t" style="left:203.0px;top:384.9px;font-size:16px;letter-spacing:0.728px;">2,2,1</div>
<div class="t" style="left:22.4px;top:413.3px;font-size:16px;letter-spacing:-0.215px;">Number of neighboring gradients</div>
<div class="t" style="left:256.0px;top:413.3px;font-size:16px;">0</div>
<div class="t" style="left:33.0px;top:448.7px;font-size:16px;letter-spacing:-0.990px;">IO</div>
<div class="t" style="left:223.0px;top:481.6px;font-size:16px;letter-spacing:-0.191px;">Input Volume</div>
<div class="t" style="left:325.0px;top:484.3px;font-size:16px;letter-spacing:-0.055px;">ci</div>
<div class="t" style="left:210.4px;top:520.7px;font-size:16px;letter-spacing:0.013px;">Output Volume</div>
<div class="t" style="left:327.0px;top:523.3px;font-size:16px;">e</div>
<div class="t" style="left:46.3px;top:574.7px;font-size:16px;letter-spacing:0.034px;">Default</div>
<div class="t" style="left:188.5px;top:574.7px;font-size:16px;letter-spacing:-0.601px;color:#9c9c9c;">Cancel</div>
<div class="t" style="left:314.3px;top:574.7px;font-size:16px;letter-spacing:-0.031px;">Apply</div>
<div class="t" style="left:23.8px;top:822.3px;font-size:16px;letter-spacing:-0.121px;">Manipulate Slice Views</div>
<div class="t" style="left:23.8px;top:899.3px;font-size:16px;letter-spacing:-0.018px;">Manipulate 3D View</div>

<div class="a" style="left:0;top:1022px;width:1680px;height:1px;background:#c4c4c4;"></div><div class="a" style="left:0;top:1023px;width:1680px;height:1px;background:#9c9c9c;"></div>
<div class="a" style="left:1468px;top:1027px;width:157px;height:23px;box-sizing:border-box;border:1px solid #9a9a9a;border-right:none;border-bottom:none;background:#fff;"></div>
<div class="a" style="left:1624px;top:1027px;width:56px;height:23px;box-sizing:border-box;border:1px solid #9a9a9a;border-right:none;border-bottom:none;background:#fff;"></div>
<svg class="a" style="left:1642px;top:1028px" width="18" height="18" viewBox="0 0 18 18"><defs><radialGradient id="rx" cx="45%" cy="30%" r="70%"><stop offset="0" stop-color="#ff7060"/><stop offset=".5" stop-color="#ee1010"/><stop offset="1" stop-color="#a80000"/></radialGradient></defs><circle cx="9" cy="9" r="8" fill="url(#rx)"/><path d="M5.6 5.6 L12.4 12.4 M12.4 5.6 L5.6 12.4" stroke="#fff" stroke-width="2.6" stroke-linecap="round"/></svg>
<svg class="a" style="left:1666px;top:1036px" width="14" height="14" viewBox="0 0 14 14"><path d="M2 14 L14 2 M6 14 L14 6 M10 14 L14 10" stroke="#333" stroke-width="1.2"/></svg>

</body></html>
